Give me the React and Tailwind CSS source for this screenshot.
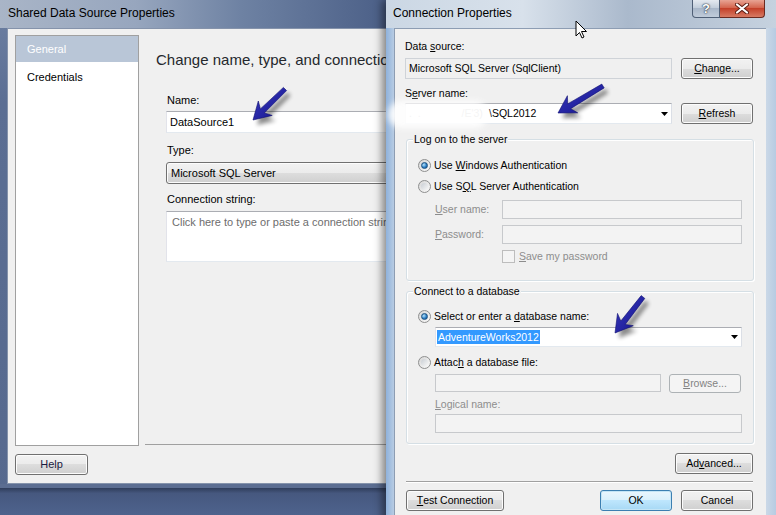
import React from "react";

const BTN =
  "flex items-center justify-center rounded-[3px] border border-[#707070] bg-[linear-gradient(to_bottom,#f2f2f2,#ebebeb_50%,#dddddd_50%,#cfcfcf)] shadow-[inset_0_0_0_1px_#fcfcfc] text-black";
const BTN_DIS =
  "flex items-center justify-center rounded-[3px] border border-[#adb2b5] bg-[#f4f4f4] text-[#838383]";
const BTN_DEF =
  "flex items-center justify-center rounded-[3px] border border-[#3c7fb1] bg-[linear-gradient(to_bottom,#eaf6fd,#d9f0fc_50%,#bee6fd_50%,#a7d9f5)] shadow-[inset_0_0_0_1px_#c4e5f6] text-black";
const TB = "border border-[#abadb3] border-r-[#dbdfe6] border-b-[#e3e9ef] border-l-[#e2e3ea] bg-white";
const TB_DIS = "border border-[#c7c9cc] bg-[#f3f3f3]";

function Radio({ checked }) {
  return (
    <span className="w-[13px] h-[13px] shrink-0 rounded-full border border-[#8e8f8f] bg-[linear-gradient(135deg,#d6d6d6,#fbfbfb)] flex items-center justify-center">
      {checked ? (
        <span className="w-[7px] h-[7px] rounded-full border border-[#1c5180] bg-[radial-gradient(circle_at_35%_35%,#b9e4fb,#2d80c6_55%,#0d4a87)]" />
      ) : (
        <span className="w-[7px] h-[7px] rounded-full bg-[linear-gradient(135deg,#c9ced4,#f7f7f7)]" />
      )}
    </span>
  );
}

function DropArrow() {
  return (
    <svg width="7" height="4" viewBox="0 0 7 4" className="shrink-0">
      <polygon points="0,0 7,0 3.5,4" fill="#000" />
    </svg>
  );
}

function LeftWindow() {
  return (
    <div className="absolute left-0 top-0 w-[388px] h-[515px] overflow-hidden flex flex-col bg-[linear-gradient(to_bottom,#6e81a3,#5b6e93_20%,#56698e)]">
      <div className="h-[28px] shrink-0 pl-[8px] pt-[6px] text-[12px] leading-[15px] text-black bg-[linear-gradient(to_right,#a9b5c7,#97a6be_35%,#6e82a3_62%,#4b5f87)]">
        Shared Data Source Properties
      </div>
      <div className="ml-[7px] w-[393px] h-[456px] shrink-0 border border-[#8593ab] bg-[#f0f0f0] pl-[7px] pt-[6px] flex flex-col text-[11px] leading-[13px] text-black">
        <div className="flex h-[411px] shrink-0">
          <div className="w-[124px] shrink-0 h-full border border-[#a0a0a0] bg-white">
            <div className="h-[26px] bg-[#b9c6d7] text-white pl-[11px] flex items-center">General</div>
            <div className="h-[26px] mt-[2px] pl-[11px] flex items-center">Credentials</div>
          </div>
          <div className="ml-[6px] w-[250px] shrink-0 flex flex-col">
            <div className="mt-[16px] pl-[11px] text-[15px] leading-[18px] whitespace-nowrap text-[#25282d]">
              Change name, type, and connection options.
            </div>
            <div className="mt-[25px] pl-[22px]">Name:</div>
            <div className={TB + " mt-[4px] ml-[21px] w-[229px] h-[22px] flex items-center pl-[3px]"}>DataSource1</div>
            <div className="mt-[11px] pl-[22px]">Type:</div>
            <div className={BTN + " !justify-start mt-[5px] ml-[21px] w-[229px] h-[22px] pl-[4px]"}>Microsoft SQL Server</div>
            <div className="mt-[9px] pl-[22px]">Connection string:</div>
            <div className={TB + " mt-[5px] ml-[21px] w-[229px] h-[51px] pl-[5px] pt-[4px] text-[#6d6d6d] whitespace-nowrap"}>
              Click here to type or paste a connection string.
            </div>
            <div className="mt-auto mb-[1px] h-[1px] bg-[#a0a0a0]" />
          </div>
        </div>
        <button className={BTN + " mt-[8px] w-[73px] h-[21px] text-[11px] !text-[#1b1b40]"}>Help</button>
      </div>
      <div className="h-[4px] shrink-0 bg-[#5b6d91]" />
      <div className="flex-1 bg-[linear-gradient(to_bottom,#2f3d5b,#46587f_20%,#4e638d)]" />
    </div>
  );
}

function RightWindow() {
  return (
    <div className="absolute left-[386px] top-0 w-[390px] h-[530px] flex flex-col bg-[linear-gradient(to_right,#8fb2dc,#cbd8e6_3%,#d6e0ea_96%,#b7cbe2)] shadow-[-4px_0_8px_rgba(0,0,0,0.45)]">
      <div className="h-[28px] shrink-0 flex items-start bg-[linear-gradient(to_right,#cbd7e4,#d8e1eb_35%,#aab9cc_62%,#c6d2df)]">
        <div className="pl-[7px] pt-[6px] text-[12px] leading-[15px] text-black">Connection Properties</div>
        <div className="ml-auto mr-[11px] flex">
          <div className="w-[28px] h-[18px] rounded-bl-[4px] border border-t-0 border-[#4f5f76] bg-[linear-gradient(to_bottom,#e4e9f0,#c3cedb_45%,#a9b7c9_50%,#c0ccda)] flex items-center justify-center text-[13px] font-bold text-white [text-shadow:0_0_2px_#1e2738,0_0_1px_#1e2738]">
            ?
          </div>
          <div className="w-[45px] h-[18px] rounded-br-[4px] border border-t-0 border-l-0 border-[#6b2a20] bg-[linear-gradient(to_bottom,#e8a494,#d4664f_45%,#c4412a_50%,#d77a63)] flex items-center justify-center">
            <svg width="14" height="11" viewBox="0 0 14 11">
              <path d="M2 1.5 L12 9.5 M12 1.5 L2 9.5" stroke="#5a1c12" strokeWidth="4" strokeLinecap="round" />
              <path d="M2 1.5 L12 9.5 M12 1.5 L2 9.5" stroke="#fff" strokeWidth="2.2" strokeLinecap="round" />
            </svg>
          </div>
        </div>
      </div>
      <div className="ml-[8px] w-[372px] flex-1 border-l border-t border-[#8d9db3] bg-[#f0f0f0] pl-[10px] pt-[11px] flex flex-col text-[10.5px] leading-[13px] text-black">
        <div>
          Data <u>s</u>ource:
        </div>
        <div className="mt-[5px] flex">
          <div className="w-[267px] h-[21px] border border-[#cfd3d8] bg-[#f0f0f0] pl-[3px] flex items-center">
            Microsoft SQL Server (SqlClient)
          </div>
          <button className={BTN + " ml-[9px] w-[72px] h-[21px] text-[10.5px]"}>
            <u>C</u>hange...
          </button>
        </div>
        <div className="mt-[8px]">
          S<u>e</u>rver name:
        </div>
        <div className="mt-[3px] flex">
          <div className={TB + " w-[267px] h-[21px] flex items-center pl-[3px] pr-[3px]"}>
            <span className="text-[#9a9a9a] w-[80px] whitespace-pre">.  .              /E'3)</span>
            <span>\SQL2012</span>
            <span className="ml-auto">
              <DropArrow />
            </span>
          </div>
          <button className={BTN + " ml-[9px] w-[72px] h-[21px] text-[10.5px]"}>
            <u>R</u>efresh
          </button>
        </div>

        <div className="mt-[15px] ml-[1px] w-[348px] h-[142px] shrink-0 rounded-[3px] border border-[#d5dfe5] shadow-[inset_1px_1px_0_#fff,1px_1px_0_#fff] flex flex-col pl-[11px]">
          <div className="-mt-[7px] -ml-[5px] self-start px-[1px] bg-[#f0f0f0]">Log on to the server</div>
          <div className="mt-[13px] flex items-center h-[13px]">
            <Radio checked />
            <span className="ml-[3px]">
              Use <u>W</u>indows Authentication
            </span>
          </div>
          <div className="mt-[8px] flex items-center h-[13px]">
            <Radio />
            <span className="ml-[3px]">
              Use S<u>Q</u>L Server Authentication
            </span>
          </div>
          <div className="mt-[7px] flex items-center h-[19px] pl-[17px] text-[#8d8d8d]">
            <span className="w-[67px]">
              <u>U</u>ser name:
            </span>
            <div className={TB_DIS + " w-[240px] h-[19px]"} />
          </div>
          <div className="mt-[6px] flex items-center h-[19px] pl-[17px] text-[#8d8d8d]">
            <span className="w-[67px]">
              <u>P</u>assword:
            </span>
            <div className={TB_DIS + " w-[240px] h-[19px]"} />
          </div>
          <div className="mt-[6px] flex items-center h-[13px] pl-[84px] text-[#8d8d8d]">
            <span className="w-[13px] h-[13px] border border-[#bdbdbd] bg-[#f4f4f4]" />
            <span className="ml-[4px]">
              <u>S</u>ave my password
            </span>
          </div>
        </div>

        <div className="mt-[10px] ml-[1px] w-[348px] h-[153px] shrink-0 rounded-[3px] border border-[#d5dfe5] shadow-[inset_1px_1px_0_#fff,1px_1px_0_#fff] flex flex-col pl-[11px]">
          <div className="-mt-[7px] -ml-[5px] self-start px-[1px] bg-[#f0f0f0]">Connect to a database</div>
          <div className="mt-[12px] flex items-center h-[13px]">
            <Radio checked />
            <span className="ml-[3px]">
              Select or enter a <u>d</u>atabase name:
            </span>
          </div>
          <div className={TB + " mt-[4px] ml-[17px] w-[307px] h-[20px] flex items-center pl-[1px] pr-[3px]"}>
            <span className="bg-[#3399ff] text-white px-[1px] leading-[14px]">AdventureWorks2012</span>
            <span className="ml-auto">
              <DropArrow />
            </span>
          </div>
          <div className="mt-[9px] flex items-center h-[13px]">
            <Radio />
            <span className="ml-[3px]">
              Attac<u>h</u> a database file:
            </span>
          </div>
          <div className="mt-[5px] ml-[17px] flex items-start h-[19px]">
            <div className={TB_DIS + " w-[226px] h-[18px]"} />
            <button className={BTN_DIS + " ml-[8px] w-[72px] h-[19px] text-[10.5px]"}>
              <u>B</u>rowse...
            </button>
          </div>
          <div className="mt-[5px] ml-[17px] text-[#8d8d8d]">
            <u>L</u>ogical name:
          </div>
          <div className={TB_DIS + " mt-[3px] ml-[17px] w-[307px] h-[19px]"} />
        </div>

        <div className="mt-[9px] flex justify-end pr-[13px]">
          <button className={BTN + " w-[78px] h-[21px] text-[10.5px]"}>
            Ad<u>v</u>anced...
          </button>
        </div>
        <div className="mt-[7px] ml-[1px] w-[347px] h-[2px] border-t border-[#a0a0a0] border-b border-b-white" />
        <div className="mt-[7px] flex pr-[13px] pl-[1px]">
          <button className={BTN + " w-[98px] h-[21px] text-[10.5px]"}>
            <u>T</u>est Connection
          </button>
          <button className={BTN_DEF + " ml-auto w-[72px] h-[21px] text-[10.5px]"}>OK</button>
          <button className={BTN + " ml-[9px] w-[72px] h-[21px] text-[10.5px]"}>Cancel</button>
        </div>
      </div>
    </div>
  );
}

function arrowPoly(x1, y1, x2, y2, sw = 2.8, hw = 10, hl = 17) {
  const dx = x2 - x1,
    dy = y2 - y1,
    L = Math.hypot(dx, dy);
  const ux = dx / L,
    uy = dy / L,
    px = -uy,
    py = ux;
  const bx = x2 - ux * hl,
    by = y2 - uy * hl;
  const nx = x2 - ux * (hl - 4),
    ny = y2 - uy * (hl - 4);
  const p = [
    [x1 + px * sw * 0.8, y1 + py * sw * 0.8],
    [nx + px * sw, ny + py * sw],
    [bx + px * hw, by + py * hw],
    [x2, y2],
    [bx - px * hw, by - py * hw],
    [nx - px * sw, ny - py * sw],
    [x1 - px * sw * 0.8, y1 - py * sw * 0.8],
  ];
  return p.map(([a, b]) => `${a.toFixed(1)},${b.toFixed(1)}`).join(" ");
}

const ARROWS = [
  [285, 89, 253, 120],
  [603, 86, 558, 113],
  [643, 297, 615, 333],
];

function Overlay() {
  return (
    <>
      <div className="absolute left-[388px] top-[101px] w-[100px] h-[27px] rounded-full bg-white opacity-90 blur-[3px] pointer-events-none" />
      <svg className="absolute left-0 top-0 pointer-events-none" width="776" height="515" viewBox="0 0 776 515">
        <defs>
          <filter id="sh" x="-50%" y="-50%" width="200%" height="200%">
            <feGaussianBlur stdDeviation="2.2" />
          </filter>
          <linearGradient id="ag" x1="0" y1="0" x2="1" y2="1">
            <stop offset="0" stopColor="#3b3bc0" />
            <stop offset="1" stopColor="#12128a" />
          </linearGradient>
        </defs>
        {ARROWS.map(([a, b, c, d], i) => (
          <g key={i}>
            <polygon points={arrowPoly(a + 4, b + 5, c + 4, d + 5)} fill="#000" opacity="0.45" filter="url(#sh)" />
            <polygon points={arrowPoly(a, b, c, d)} fill="url(#ag)" stroke="#0e0e70" strokeWidth="0.6" />
          </g>
        ))}
        <polygon
          points="576,21 576,36 579.5,32.5 582,38 584,37 581.5,31.5 586.5,31.5"
          fill="#fff"
          stroke="#000"
          strokeWidth="1"
          strokeLinejoin="round"
        />
      </svg>
    </>
  );
}

export default function App() {
  return (
    <div className="relative w-[776px] h-[515px] overflow-hidden bg-[#4d6088] font-['Liberation_Sans',Arial,sans-serif]">
      <LeftWindow />
      <RightWindow />
      <Overlay />
    </div>
  );
}
